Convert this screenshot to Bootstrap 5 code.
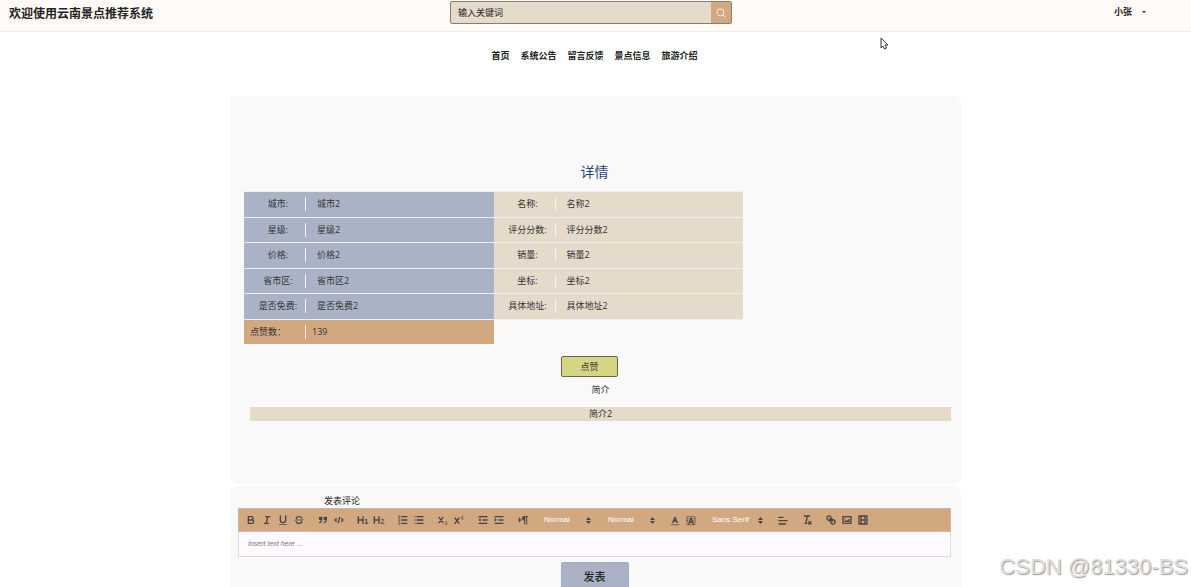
<!DOCTYPE html>
<html lang="zh-CN">
<head>
<meta charset="utf-8">
<meta name="viewport" content="width=device-width, initial-scale=1">
<title>欢迎使用云南景点推荐系统</title>
<link href="https://cdn.jsdelivr.net/npm/bootstrap@5.3.0/dist/css/bootstrap.min.css" rel="stylesheet">
<script src="https://cdn.jsdelivr.net/npm/bootstrap@5.3.0/dist/js/bootstrap.bundle.min.js" defer></script>
<style>
  :root { --sand:#e6dacb; --clay:#d2a881; --slate:#a9b3c5; --ink:#333; }
  body { font:9px/14px "Open Sans","Noto Sans CJK SC",sans-serif; color:var(--ink); background:#fff; }
  .topbar { height:32px; background:#fffaf7; border-bottom:1px solid #f0ebe8; }
  .brand-text { font-size:12px; line-height:28px; padding-left:9px; color:#222; }
  .search-box { width:282px; height:23px; margin-top:1px; border:1px solid #857d76; border-radius:2px; background:var(--sand); overflow:hidden; }
  .search-box input { background:transparent; border:0; outline:0; padding:0 7px; min-width:0; color:#222; }
  .search-box input::placeholder { color:#222; opacity:1; }
  .search-box button { width:20px; background:var(--clay); border:0; padding:0; }
  .user-menu { padding-right:18px; line-height:24px; }
  .user-menu button { border:0; background:none; padding:0; margin-right:27px; color:#222; gap:10px; }
  .caret-mark { border:2px solid transparent; border-top-color:#222; border-bottom:0; }
  .main-nav { gap:11px; padding:17px 2px 33px 0; }
  .main-nav a { color:#222; text-decoration:none; }
  .page-wrap { max-width:731px; }
  .panel { background:#f9f9f9; border-radius:8px; margin-bottom:2px; }
  .detail-panel { padding:66px 10px 63px 14px; }
  .detail-title { font-size:14px; line-height:20px; color:#2c4674; margin:0 0 9px; padding-right:6px; }
  .facts { width:100%; max-width:499px; height:153px; table-layout:fixed; border-collapse:collapse; }
  .facts th { width:62px; font-weight:400; text-align:center; padding:0; }
  .facts th span { display:block; border-right:1px solid #f4f4f4; padding-left:7px; white-space:nowrap; }
  .facts td { padding:0 0 0 11px; }
  .facts tr { border-top:1px solid #eeeeec; }
  .facts .cool { background:var(--slate); }
  .facts .warm { background:var(--sand); }
  .facts .likes { background:var(--clay); }
  .facts th.likes { text-align:left; }
  .facts th.likes span { padding-left:6px; }
  .facts td.likes { padding-left:6px; }
  .like-row { padding:12px 16px 6px 0; }
  .like-btn { width:57px; height:21px; padding:0; border:1px solid #66664e; border-radius:2px; background:#d6d584; color:var(--ink); }
  .intro { padding-left:6px; }
  .intro h2 { font-size:9px; line-height:14px; margin:0 0 10px; }
  .intro p { background:var(--sand); margin:0; }
  .comment-panel { padding:8px 10px 16px 8px; }
  .comment-label { padding-left:86px; display:block; color:#222; }
  .tools { background:var(--clay); border:1px solid #ccb9a5; height:24px; gap:8px; padding:0 4px; }
  .tools button { width:16px; height:16px; padding:0; border:0; background:none; display:flex; align-items:center; justify-content:center; }
  .tools svg { fill:none; stroke:#494540; stroke-width:2; stroke-linecap:round; stroke-linejoin:round; }
  .tools button svg { width:12px; height:12px; }
  .tools .solid { fill:#494540; stroke:none; }
  .tools .slim { stroke-width:1; }
  .pick { position:relative; width:56px; }
  .pick.wide { width:60px; }
  .pick select { appearance:none; width:100%; height:16px; border:0; background:none; color:#fff; font:8px/14px "Liberation Sans",sans-serif; padding:0 0 2px 5px; }
  .pick svg { position:absolute; right:4px; top:5px; width:5px; height:7px; pointer-events:none; }
  .editor { display:block; width:100%; height:25px; resize:none; border:1px solid #dcdce0; border-top:0; background:#fffaff; padding:5px 9px; font:7px/14px "Liberation Sans",sans-serif; overflow:hidden; }
  .editor::placeholder { font-style:italic; color:#777; opacity:1; }
  .submit-btn { width:68px; height:30px; margin-top:5px; padding:0; border:1px solid #a3adbf; border-radius:2px; background:var(--slate); color:#222; font-size:11px; font-weight:500; }
  .pointer { position:absolute; left:880px; top:37px; }
  .watermark { position:absolute; right:3px; bottom:6px; font:22px/28px "Liberation Sans",sans-serif; color:#dedede; text-shadow:1px 1px 1px #999; }
</style>
</head>
<body class="vh-100 overflow-hidden position-relative">
<header class="topbar row g-0">
  <div class="col brand-text fw-bold">欢迎使用云南景点推荐系统</div>
  <form class="search-box col-auto d-flex" role="search">
    <input class="flex-grow-1" type="search" placeholder="输入关键词" aria-label="输入关键词">
    <button type="button" aria-label="搜索"><svg width="10" height="10" viewBox="0 0 10 10" fill="none" stroke="#fff" stroke-width=".8"><circle cx="4.3" cy="4.3" r="3.5"/><path d="M7 7l2.5 2.5"/></svg></button>
  </form>
  <div class="col user-menu d-flex justify-content-end align-items-start">
    <button type="button" class="d-flex align-items-center fw-bold">小张<span class="caret-mark"></span></button>
  </div>
</header>
<nav class="main-nav d-flex justify-content-center fw-bold">
  <a href="#">首页</a><a href="#">系统公告</a><a href="#">留言反馈</a><a href="#">景点信息</a><a href="#">旅游介绍</a>
</nav>
<main class="page-wrap mx-auto">
  <section class="panel detail-panel">
    <h1 class="detail-title text-center fw-normal">详情</h1>
    <table class="facts">
      <colgroup><col style="width:62px"><col><col style="width:62px"><col></colgroup>
      <tr><th class="cool"><span>城市:</span></th><td class="cool">城市2</td><th class="warm"><span>名称:</span></th><td class="warm">名称2</td></tr>
      <tr><th class="cool"><span>星级:</span></th><td class="cool">星级2</td><th class="warm"><span>评分分数:</span></th><td class="warm">评分分数2</td></tr>
      <tr><th class="cool"><span>价格:</span></th><td class="cool">价格2</td><th class="warm"><span>销量:</span></th><td class="warm">销量2</td></tr>
      <tr><th class="cool"><span>省市区:</span></th><td class="cool">省市区2</td><th class="warm"><span>坐标:</span></th><td class="warm">坐标2</td></tr>
      <tr><th class="cool"><span>是否免费:</span></th><td class="cool">是否免费2</td><th class="warm"><span>具体地址:</span></th><td class="warm">具体地址2</td></tr>
      <tr><th class="likes"><span>点赞数：</span></th><td class="likes">139</td></tr>
    </table>
    <div class="like-row text-center"><button type="button" class="like-btn">点赞</button></div>
    <div class="intro text-center"><h2 class="fw-normal">简介</h2><p>简介2</p></div>
  </section>
  <section class="panel comment-panel">
    <label class="comment-label" for="comment">发表评论</label>
    <div class="tools d-flex align-items-center" role="toolbar" aria-label="格式">
      <div class="d-flex">
        <button type="button" aria-label="粗体"><svg viewBox="0 0 18 18"><path d="M5 4h4.500a2.500 2.500 0 0 1 0 5H5zM5 9h5.500a2.500 2.500 0 0 1 0 5H5z"/></svg></button>
        <button type="button" aria-label="斜体"><svg viewBox="0 0 18 18"><path d="M7 4h6M5 14h6M8 14l2-10"/></svg></button>
        <button type="button" aria-label="下划线"><svg viewBox="0 0 18 18"><path d="M5 3v6a4 4 0 0 0 8 0V3"/><rect class="solid" x="3" y="15" width="12" height="1"/></svg></button>
        <button type="button" aria-label="删除线"><svg viewBox="0 0 18 18"><path class="slim" d="M15.500 8.500l-13 1"/><path class="solid" d="M9.007 8C6.542 7.791 6 7.519 6 6.500 6 5.792 7.283 5 9 5c1.571 0 2.765.679 2.969 1.309a1 1 0 0 0 1.900-.617C13.356 4.106 11.354 3 9 3 6.200 3 4 4.538 4 6.500a3.200 3.200 0 0 0 .5 1.843ZM8.984 10C11.457 10.208 12 10.479 12 11.500c0 .708-1.283 1.500-3 1.500-1.571 0-2.765-.679-2.969-1.309a1 1 0 1 0-1.900.617C4.644 13.894 6.646 15 9 15c2.800 0 5-1.538 5-3.500a3.200 3.200 0 0 0-.5-1.843Z"/></svg></button>
      </div>
      <div class="d-flex">
        <button type="button" aria-label="引用"><svg viewBox="0 0 18 18"><path fill="#494540" d="M4 5h3v3H4zM11 5h3v3h-3z"/><path d="M7 8c0 4-3 5-3 5M14 8c0 4-3 5-3 5"/></svg></button>
        <button type="button" aria-label="代码"><svg viewBox="0 0 18 18"><path d="M5 7L3 9l2 2M13 7l2 2-2 2M10 5L8 13"/></svg></button>
      </div>
      <div class="d-flex">
        <button type="button" aria-label="标题一"><svg viewBox="0 0 18 18"><path d="M2 4v10M9 4v10M2 9h7"/><path stroke-width="1.500" d="M12.300 9l1.900-1.400V14M12 14h4.300"/></svg></button>
        <button type="button" aria-label="标题二"><svg viewBox="0 0 18 18"><path d="M2 4v10M9 4v10M2 9h7"/><path stroke-width="1.500" d="M12.200 8.800c.6-1.800 3.800-1.500 3.600.5-.1 1.600-3.400 2.700-3.600 4.700h4.300"/></svg></button>
      </div>
      <div class="d-flex">
        <button type="button" aria-label="编号列表"><svg viewBox="0 0 18 18"><path d="M7 4h8M7 9h8M7 14h8"/><path class="slim" d="M2.500 3l1-.5v3M2.500 5.500h2M2.500 8c1-1 2 0 1.500 1l-1.500 1.500h2M2.500 12.500h1.700L3.500 14c1.500 0 1 2-1 1.500"/></svg></button>
        <button type="button" aria-label="项目列表"><svg viewBox="0 0 18 18"><path d="M6 4h9M6 9h9M6 14h9M3 4h0M3 9h0M3 14h0"/></svg></button>
      </div>
      <div class="d-flex">
        <button type="button" aria-label="下标"><svg viewBox="0 0 18 18"><path d="M3 5l6 8M9 5l-6 8"/><path class="slim" d="M12.500 12.200c.5-1.500 2.800-1 2.500.3-.2 1-2.300 1.500-2.500 3H15.500"/></svg></button>
        <button type="button" aria-label="上标"><svg viewBox="0 0 18 18"><path d="M3 6l6 8M9 6l-6 8"/><path class="slim" d="M12.500 4.200c.5-1.500 2.800-1 2.500.3-.2 1-2.300 1.500-2.500 3H15.500"/></svg></button>
      </div>
      <div class="d-flex">
        <button type="button" aria-label="减少缩进"><svg viewBox="0 0 18 18"><path d="M3 14h12M3 4h12M9 9h6"/><path fill="#494540" class="slim" d="M5 7v4L3 9z"/></svg></button>
        <button type="button" aria-label="增加缩进"><svg viewBox="0 0 18 18"><path d="M3 14h12M3 4h12M9 9h6"/><path fill="#494540" class="slim" d="M3 7v4l2-2z"/></svg></button>
      </div>
      <div class="d-flex">
        <button type="button" aria-label="文字方向"><svg viewBox="0 0 18 18"><path fill="#494540" class="slim" d="M3 6v6l3-3z"/><path fill="#494540" d="M11 4a2 2 0 0 0 0 5z"/><path stroke-width="1.500" d="M11 4h5M11.500 4v11M14.500 4v11"/></svg></button>
      </div>
      <div class="pick"><select aria-label="字号"><option>Normal</option></select><svg viewBox="0 0 5 7"><path class="solid" d="M0 3l2.500-3L5 3zM0 4l2.500 3L5 4z"/></svg></div>
      <div class="pick"><select aria-label="标题级别"><option>Normal</option></select><svg viewBox="0 0 5 7"><path class="solid" d="M0 3l2.500-3L5 3zM0 4l2.500 3L5 4z"/></svg></div>
      <div class="d-flex">
        <button type="button" aria-label="文字颜色"><svg viewBox="0 0 18 18"><path class="slim" d="M3 16h12"/><path d="M5.500 13L9 5l3.500 8M7 10.500h4"/></svg></button>
        <button type="button" aria-label="背景颜色"><svg viewBox="0 0 18 18"><path class="slim" stroke-dasharray="1 1.500" d="M3 4h12v12H3zM3 7h3M12 7h3M3 10h2M13 10h2"/><path d="M5.500 15L9 6l3.500 9M7 12h4"/></svg></button>
      </div>
      <div class="pick wide"><select aria-label="字体"><option>Sans Serif</option></select><svg viewBox="0 0 5 7"><path class="solid" d="M0 3l2.500-3L5 3zM0 4l2.500 3L5 4z"/></svg></div>
      <button type="button" aria-label="对齐"><svg viewBox="0 0 18 18"><path d="M3 10h12M3 15h10M3 5h6"/></svg></button>
      <button type="button" aria-label="清除格式"><svg viewBox="0 0 18 18"><path d="M5 3h8M6 14h3M9.500 3L7.500 13M11.500 11.500l3.500 3.500M15 11.500L11.500 15"/></svg></button>
      <div class="d-flex">
        <button type="button" aria-label="链接"><svg viewBox="0 0 18 18"><path d="M7 7l4 4M8.900 4.600a3.200 3.200 0 1 0-4.300 4.300C6 10.200 7.700 9.800 8.700 8.700S10 6 8.900 4.600M13.400 9.100a3.200 3.200 0 1 1-4.300 4.300C7.800 12 8.200 10.300 9.300 9.300s2.800-1.300 4.100-.2"/></svg></button>
        <button type="button" aria-label="图片"><svg viewBox="0 0 18 18"><path d="M3 4h12v10H3z"/><path class="solid" d="M5 12v-1l2-2 2 1 3-3 1 1v4z"/><circle class="solid" cx="6" cy="7" r="1"/></svg></button>
        <button type="button" aria-label="视频"><svg viewBox="0 0 18 18"><path d="M3 3h12v12H3zM6 3v12M12 3v12M6 9h6"/></svg></button>
      </div>
    </div>
    <textarea class="editor" id="comment" placeholder="Insert text here ..."></textarea>
    <div class="text-center"><button type="button" class="submit-btn">发表</button></div>
  </section>
</main>
<svg class="pointer" width="9" height="13" viewBox="0 0 9 13" fill="#fff" stroke="#333" aria-hidden="true"><path d="M1 1v10l2-2 1.500 3 2-1L5 8h3z"/></svg>
<div class="watermark">CSDN @81330-BS</div>
</body>
</html>
